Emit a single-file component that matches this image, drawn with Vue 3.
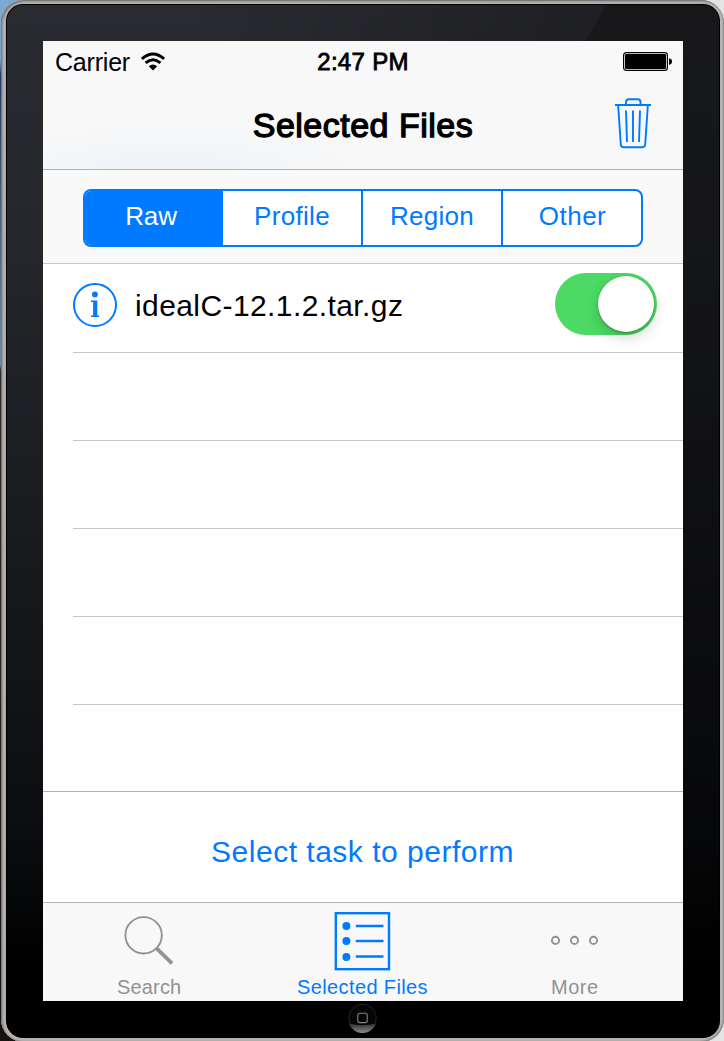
<script setup>
import { ref } from 'vue'

const segments = ['Raw', 'Profile', 'Region', 'Other']
const activeSegment = ref('Raw')
const enabled = ref(true)
const emptyRows = 4
</script>

<template>
  <div class="desktop">
    <div class="device">
      <div class="bezel">
        <div class="screen">
          <header class="header">
            <div class="status">
              <div class="carrier">
                <span class="carrier-name">Carrier</span>
                <svg class="wifi" width="26" height="20" viewBox="0 0 26 20">
                  <path d="M1.9 6.9Q13-3.1 24.1 6.9" fill="none" stroke="#000" stroke-width="2.9" />
                  <path d="M5.6 10.9Q13 4.5 20.4 10.9" fill="none" stroke="#000" stroke-width="2.8" />
                  <path d="M8.8 14.3Q13 10.7 17.2 14.3L13 18.6Z" fill="#000" />
                </svg>
              </div>
              <span class="time">2:47 PM</span>
              <svg class="battery" width="50" height="20" viewBox="0 0 50 20">
                <rect x=".6" y=".6" width="43.8" height="17.8" rx="2.6" fill="none" stroke="#000" stroke-width="1.2" />
                <rect x="2" y="2" width="41" height="15" rx="1.2" fill="#000" />
                <path d="M46 6.2q3 .5 3 3.3t-3 3.3z" fill="#000" />
              </svg>
            </div>
            <div class="nav">
              <h1>Selected Files</h1>
              <svg class="trash" width="36" height="51" viewBox="0 0 36 51" fill="none" stroke="#007aff" stroke-width="1.9">
                <path d="M0 7H36M11 7V4Q11 1.2 14 1.2H22.5Q25.5 1.2 25.5 4V7M3.2 8L5.8 46.5Q6 49.2 8.5 49.2H27.5Q30 49.2 30.2 46.5L32.8 8M11 12.5L12 44M18 12.5V44M25 12.5L24 44" />
              </svg>
            </div>
          </header>

          <div class="filter">
            <div class="segmented">
              <button
                v-for="name in segments"
                :key="name"
                class="segment"
                :class="[name.toLowerCase(), { active: name === activeSegment }]"
                @click="activeSegment = name"
              >{{ name }}</button>
            </div>
          </div>

          <main class="files">
            <div class="row">
              <svg class="info" width="44" height="44" viewBox="0 0 44 44">
                <circle cx="22" cy="22" r="21" fill="none" stroke="#007aff" stroke-width="2" />
                <circle cx="21.9" cy="11.4" r="2.9" fill="#007aff" />
                <path d="M18 17.6H24.3V32.5H26V34H18V32.5H20.1V19.1H18Z" fill="#007aff" />
              </svg>
              <span class="filename">idealC-12.1.2.tar.gz</span>
              <button class="toggle" :class="{ on: enabled }" aria-label="Include file" @click="enabled = !enabled">
                <span class="knob"></span>
              </button>
            </div>
            <div v-for="n in emptyRows" :key="n" class="row"></div>
          </main>

          <div class="action"><button class="task">Select task to perform</button></div>

          <nav class="tabs">
            <a class="tab search">
              <svg width="52" height="60" viewBox="0 0 52 60" fill="none" stroke="#929292">
                <circle cx="20.6" cy="24.3" r="18.2" stroke-width="1.9" />
                <path d="M33.1 36.8L49 52.3" stroke-width="3.8" />
              </svg>
              <span>Search</span>
            </a>
            <a class="tab selected">
              <svg width="57" height="60" viewBox="0 0 57 60">
                <rect x="1.8" y="2.2" width="53.2" height="56" fill="none" stroke="#007aff" stroke-width="2.4" />
                <g fill="#007aff"><circle cx="12.4" cy="15" r="4" /><circle cx="12.4" cy="30" r="4" /><circle cx="12.4" cy="46" r="4" /></g>
                <path d="M21.8 15H49.5M21.8 30.1H49.5M21.8 45.6H49.5" stroke="#007aff" stroke-width="2.5" />
              </svg>
              <span>Selected Files</span>
            </a>
            <a class="tab more">
              <svg width="52" height="60" viewBox="0 0 52 60" fill="none" stroke="#929292" stroke-width="1.9">
                <circle cx="6.5" cy="29.4" r="3.6" /><circle cx="25.5" cy="29.4" r="3.6" /><circle cx="44.5" cy="29.4" r="3.6" />
              </svg>
              <span>More</span>
            </a>
          </nav>
        </div>
        <svg class="home" width="30" height="30" viewBox="0 0 30 30">
          <defs>
            <linearGradient id="shine" x1="0" y1="0" x2="0" y2="1">
              <stop offset="0" stop-color="#303030" />
              <stop offset="1" stop-color="#888" />
            </linearGradient>
          </defs>
          <circle cx="15.5" cy="15" r="13.8" fill="#050505" stroke="#222" />
          <path d="M2 20.5Q15.5 24 29 20.5A14.3 14.3 0 0 1 2 20.5Z" fill="url(#shine)" />
          <rect x="10.8" y="10.2" width="9.4" height="9.4" rx="2" fill="none" stroke="#858585" stroke-width="1.1" />
        </svg>
      </div>
    </div>
  </div>
</template>

<style>
html, body { margin: 0; background: #292524; }
</style>

<style scoped>
* { box-sizing: border-box; }
button { margin: 0; padding: 0; border: 0; background: none; font: inherit; color: inherit; }
svg { display: block; flex: none; }
.desktop {
  width: 724px; height: 1041px; overflow: hidden; padding: 0 0 0 1px;
  background: linear-gradient(#e4e4e4, #e4e4e4) right / 50% 100% no-repeat, linear-gradient(#7daace 0, #74a5cc 60px, #213c66 75px, #6a8d9e 365px, #302c2c 370px, #171310 1041px);
  font-family: "Liberation Sans", Arial, sans-serif;
}
.device {
  width: 723px; height: 1042px; padding: 4px 4px 4px 5px; border-radius: 23px;
  background: #aaa;
  box-shadow: inset 1px 1px 1px #777, inset 2px 2px 2px #999, inset -1px -1px 1px #888, inset 0 0 0 4px #b6b3b2;
}
.bezel {
  width: 714px; height: 1034px; padding: 37px 37px 0; border-radius: 17px;
  box-shadow: inset 0 0 0 1px #000;
  background:
    linear-gradient(119deg, transparent 46.6%, rgba(0,0,0,.26) 46.7%),
    linear-gradient(90deg, transparent 25%, rgba(0,0,0,.25) 80%),
    linear-gradient(#2a2b30 0, #25272c 22%, #1a1b1f 50%, #0b0d10 80%, #000 93%);
}
.screen { width: 640px; height: 960px; background: #fff; display: flex; flex-direction: column; overflow: hidden; color: #000; }
.header {
  height: 129px; flex: none; border-bottom: 1px solid #afb1b2;
  background: radial-gradient(ellipse 200px 48px at 125px 129px, #edf3f9, #f8f8f8);
}
.status { height: 41px; display: grid; grid-template-columns: 1fr auto 1fr; align-items: center; padding: 0 10px 0 12px; }
.carrier { display: flex; align-items: center; gap: 10px; }
.carrier-name { font-size: 25px; line-height: 29px; letter-spacing: -.2px; margin-top: 1px; }
.time { font-size: 24px; letter-spacing: .3px; -webkit-text-stroke: .8px #000; margin-right: 2px; }
.battery { justify-self: end; }
.nav { height: 87px; display: grid; grid-template-columns: 1fr auto 1fr; align-items: center; padding: 0 32px 2px; }
h1 { grid-column: 2; margin: 0; font-size: 34px; line-height: 40px; font-weight: 400; letter-spacing: .5px; -webkit-text-stroke: 1.3px #000; }
.trash { justify-self: end; margin-top: -2px; }
.filter { height: 94px; flex: none; padding: 19px 40px 0; background: #f9f9f9; border-bottom: 1px solid #c8c7cc; }
.segmented { height: 58px; display: flex; background: #fff; border: 2px solid #007aff; border-radius: 8px; overflow: hidden; color: #007aff; }
.segment { flex: 0 0 138px; font-size: 26px; line-height: 50px; padding: 0 0 4px; letter-spacing: .3px; }
.segment.raw { padding-right: 6px; letter-spacing: -.1px; }
.segment.other { letter-spacing: .5px; padding-left: 1px; }
.region, .other { flex-basis: 140px; border-left: 2px solid #007aff; }
.segment.active { background: #007aff; color: #fff; }
.files { height: 527px; flex: none; padding-left: 30px; }
.row { height: 88px; border-bottom: 1px solid #c8c7cc; display: flex; align-items: center; }
.row:first-child { height: 89px; padding: 0 26px 6px 0; }
.filename { margin-left: 18px; font-size: 30px; flex: 1; line-height: 36px; margin-top: 2px; letter-spacing: .41px; }
.toggle { width: 102px; height: 62px; padding: 3px; border-radius: 31px; background: #e5e5e5; display: flex; margin-top: -3px; }
.toggle.on { background: #4cd964; justify-content: flex-end; }
.knob { width: 56px; height: 56px; border-radius: 50%; background: #fff; box-shadow: 0 6px 14px rgba(0,0,0,.16), 0 2px 2px rgba(0,0,0,.12), 0 0 1px 1px rgba(0,0,0,.08); }
.action { height: 111px; flex: none; border-top: 1px solid #b2b2b2; display: flex; justify-content: center; padding: 9px 1px 0 0; }
.task { font-size: 30px; color: #007aff; letter-spacing: .5px; }
.tabs { height: 99px; flex: none; border-top: 1px solid #b2b2b2; background: #f8f8f8; display: flex; }
.tab { flex: 1; display: flex; flex-direction: column; align-items: center; padding-top: 8px; font-size: 20px; line-height: 24px; color: #929292; letter-spacing: .38px; }
.tab svg { margin-bottom: 4px; }
.search { letter-spacing: .2px; }
.more { padding-right: 2px; letter-spacing: .5px; }
.selected { color: #007aff; padding-left: 1px; }
.home { margin: 2px 0 0 304px; }
</style>
